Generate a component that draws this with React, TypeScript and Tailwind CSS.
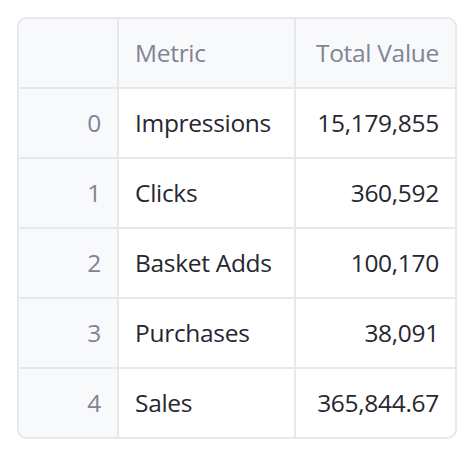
const rows = [
  ["0", "Impressions", "15,179,855"],
  ["1", "Clicks", "360,592"],
  ["2", "Basket Adds", "100,170"],
  ["3", "Purchases", "38,091"],
  ["4", "Sales", "365,844.67"],
];

export default function App() {
  return (
    <div className="w-[476px] h-[462px] bg-white pt-[17px] pl-[17px]" style={{ fontFamily: '"Open Sans", sans-serif' }}>
      <div className="w-[440px] rounded-[10px] border-2 border-[#e6e8ec] overflow-hidden">
        <div className="grid grid-cols-[100px_177px_1fr] h-[68px] bg-[#f8f9fb] text-[#808495] text-[24.5px] tracking-[-0.3px]">
          <div className="border-r-2 border-[#e6e8ec]" />
          <div className="border-r-2 border-[#e6e8ec] flex items-center px-[16px]">Metric</div>
          <div className="flex items-center justify-end px-[16px]">Total Value</div>
        </div>
        {rows.map(r => (
          <div key={r[0]} className="grid grid-cols-[100px_177px_1fr] h-[70px] border-t-2 border-[#e6e8ec] text-[24.5px] tracking-[-0.3px] text-[#262730]">
            <div className="bg-[#f8f9fb] border-r-2 border-[#e6e8ec] flex items-center justify-end px-[16px] text-[#808495]">{r[0]}</div>
            <div className="border-r-2 border-[#e6e8ec] flex items-center px-[16px]">{r[1]}</div>
            <div className="flex items-center justify-end px-[16px]">{r[2]}</div>
          </div>
        ))}
      </div>
    </div>
  );
}
